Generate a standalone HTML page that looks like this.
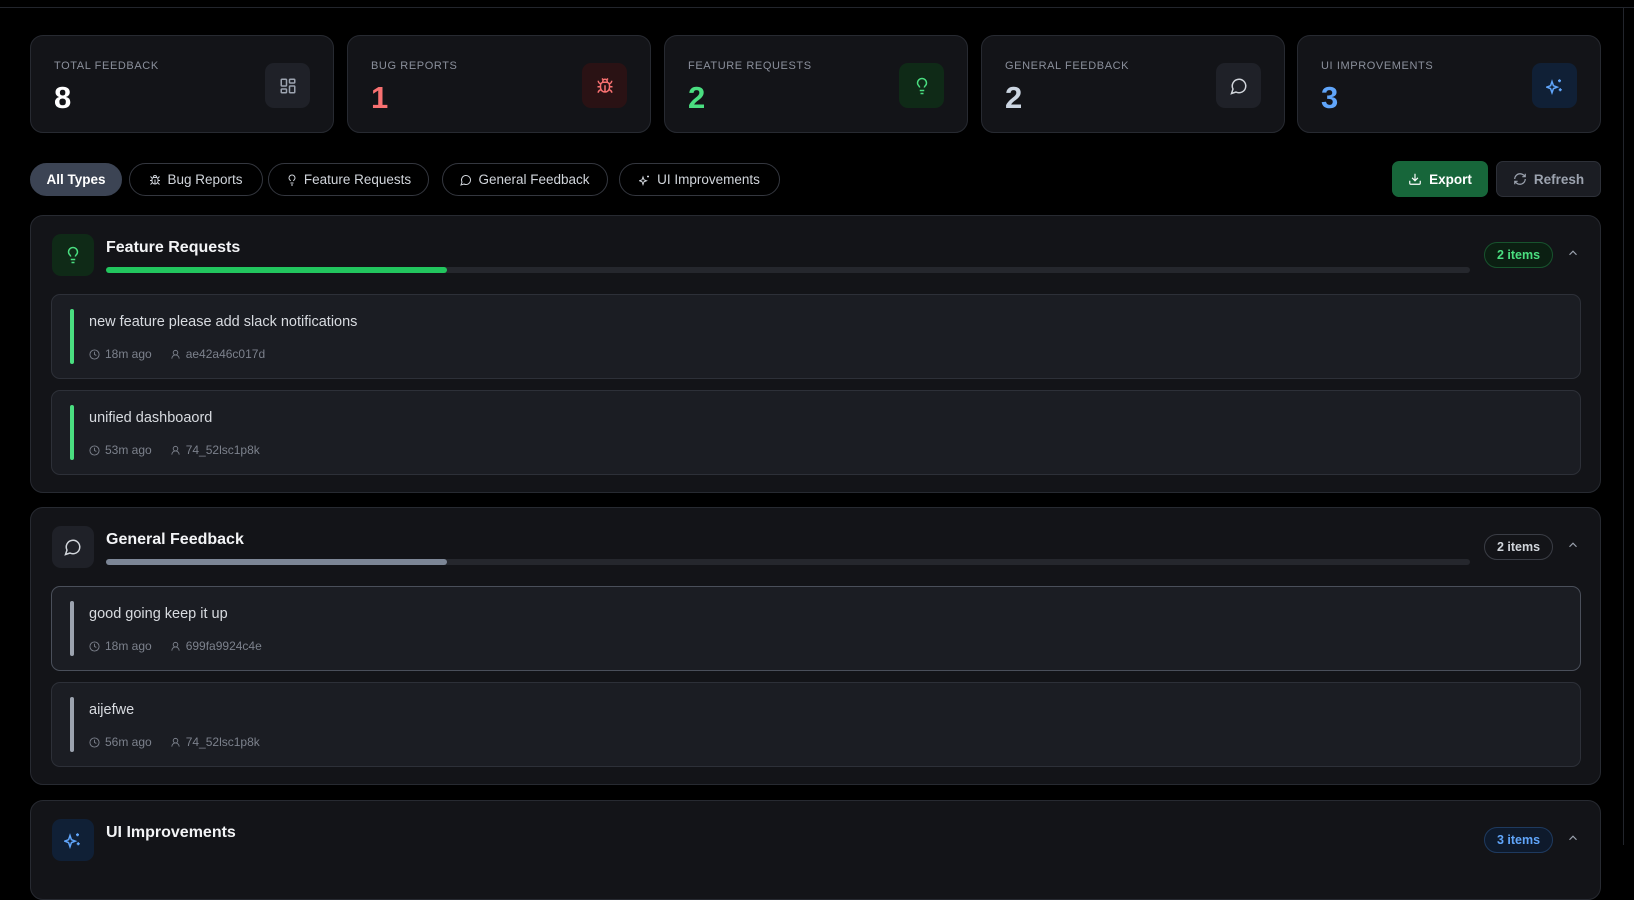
<!DOCTYPE html>
<html><head><meta charset="utf-8"><style>
*{box-sizing:border-box;margin:0;padding:0}
body{width:1634px;height:845px;background:#000;font-family:"Liberation Sans",sans-serif;color:#e5e7eb;position:relative;overflow:hidden}
.abs{position:absolute}
.stat{position:absolute;top:35px;width:304px;height:98px;background:#131418;border:1px solid #272a31;border-radius:13px}
.stat .lbl{position:absolute;left:23px;top:24px;font-size:11px;letter-spacing:.6px;color:#8b909c}
.stat .num{position:absolute;left:23px;top:44px;font-size:31px;font-weight:bold}
.stat .ic{position:absolute;right:23px;top:27px;width:45px;height:45px;border-radius:9px;display:flex;align-items:center;justify-content:center}
.pill{position:absolute;top:163px;height:33px;border:1px solid #34373f;border-radius:17px;font-size:13.5px;color:#d1d5db;display:flex;align-items:center;justify-content:center;gap:6px}
.btn{position:absolute;top:161px;height:36px;border-radius:7px;font-size:13.5px;font-weight:bold;display:flex;align-items:center;justify-content:center;gap:7px}
.sec{position:absolute;left:30px;width:1571px;background:#131418;border:1px solid #272a31;border-radius:13px}
.sic{position:absolute;left:21px;top:18px;width:42px;height:42px;border-radius:9px;display:flex;align-items:center;justify-content:center}
.stitle{position:absolute;left:75px;top:23px;font-size:16px;font-weight:bold;color:#f3f4f6}
.bar{position:absolute;left:75px;top:51px;width:1364px;height:6px;border-radius:3px;background:#25272d}
.bar i{display:block;height:6px;width:341px;border-radius:3px}
.badge{position:absolute;left:1453px;top:26px;height:26px;padding:0 12px;border-radius:13px;font-size:12.5px;font-weight:bold;display:flex;align-items:center}
.chev{position:absolute;left:1535px;top:30px}
.item{position:absolute;left:20px;width:1530px;height:85px;background:#1b1d23;border:1px solid #2d3038;border-radius:9px}
.item .vb{position:absolute;left:18px;top:14px;width:4px;height:55px;border-radius:2px}
.item .t{position:absolute;left:37px;top:19px;font-size:14.5px;color:#d8dbe0}
.item .m{position:absolute;left:37px;top:52px;font-size:12px;color:#7c818c;display:flex;align-items:center;gap:5px}
</style></head><body>
<div class="abs" style="left:0;top:7px;width:1634px;height:1px;background:#22252c"></div>
<div class="abs" style="left:1623px;top:7px;width:1px;height:838px;background:#22252c"></div>

<div class="stat" style="left:30px"><div class="lbl">TOTAL FEEDBACK</div><div class="num" style="color:#fff">8</div><div class="ic" style="background:#1f2128"><svg width="18" height="18" viewBox="0 0 24 24" fill="none" stroke="#9ca3af" stroke-width="2"><rect x="3" y="3" width="7" height="9" rx="1"/><rect x="14" y="3" width="7" height="5" rx="1"/><rect x="14" y="12" width="7" height="9" rx="1"/><rect x="3" y="16" width="7" height="5" rx="1"/></svg></div></div>
<div class="stat" style="left:347px"><div class="lbl">BUG REPORTS</div><div class="num" style="color:#f87171">1</div><div class="ic" style="background:#2a1214"><svg width="18" height="18" viewBox="0 0 24 24" fill="none" stroke="#f87171" stroke-width="2"><path d="M8 2l1.9 1.9M16 2l-1.9 1.9M9 7.1V6a3 3 0 016 0v1.1M12 20c-3.3 0-6-2.7-6-6v-3a4 4 0 014-4h4a4 4 0 014 4v3c0 3.3-2.7 6-6 6zM12 20v-9M6.5 9C4.6 8.8 3 7.1 3 5M6 13H2M3 21c0-2.1 1.7-3.9 3.8-4M20.970 5c0 2.1-1.6 3.8-3.5 4M22 13h-4M17.2 17c2.1.1 3.8 1.9 3.8 4"/></svg></div></div>
<div class="stat" style="left:664px"><div class="lbl">FEATURE REQUESTS</div><div class="num" style="color:#4ade80">2</div><div class="ic" style="background:#0f2a17"><svg width="18" height="18" viewBox="0 0 24 24" fill="none" stroke="#4ade80" stroke-width="2"><path d="M15 14c.2-1 .7-1.7 1.5-2.5 1-.9 1.5-2.2 1.5-3.5A6 6 0 006 8c0 1 .2 2.2 1.5 3.5.7.7 1.3 1.5 1.5 2.5M9 18h6M10 22h4"/></svg></div></div>
<div class="stat" style="left:981px"><div class="lbl">GENERAL FEEDBACK</div><div class="num" style="color:#cbd5e1">2</div><div class="ic" style="background:#1f2128"><svg width="18" height="18" viewBox="0 0 24 24" fill="none" stroke="#d1d5db" stroke-width="2"><path d="M7.9 20A9 9 0 104 16.1L2 22z"/></svg></div></div>
<div class="stat" style="left:1297px"><div class="lbl">UI IMPROVEMENTS</div><div class="num" style="color:#60a5fa">3</div><div class="ic" style="background:#102036"><svg width="18" height="18" viewBox="0 0 24 24" fill="none" stroke="#60a5fa" stroke-width="2"><path d="M9.9 15.5L8 21l-1.9-5.5L1 13.5l5.1-1.9L8 6l1.9 5.6L15 13.5zM18 3v4M16 5h4M19 15v4M17 17h4"/></svg></div></div>

<div class="pill" style="left:30px;width:92px;background:#3c4454;border-color:#3c4454;color:#fff;font-weight:bold">All Types</div>
<div class="pill" style="left:129px;width:134px"><svg width="12" height="12" viewBox="0 0 24 24" fill="none" stroke="#d1d5db" stroke-width="2"><path d="M9 7V6a3 3 0 016 0v1M12 20c-3.3 0-6-2.7-6-6v-3a4 4 0 014-4h4a4 4 0 014 4v3c0 3.3-2.7 6-6 6zM12 20v-9M6 13H2M22 13h-4M3 5l3 3M21 5l-3 3M3 21l3-3M21 21l-3-3"/></svg>Bug Reports</div>
<div class="pill" style="left:268px;width:161px"><svg width="12" height="12" viewBox="0 0 24 24" fill="none" stroke="#d1d5db" stroke-width="2"><path d="M15 14c.2-1 .7-1.7 1.5-2.5 1-.9 1.5-2.2 1.5-3.5A6 6 0 006 8c0 1 .2 2.2 1.5 3.5.7.7 1.3 1.5 1.5 2.5M9 18h6M10 22h4"/></svg>Feature Requests</div>
<div class="pill" style="left:442px;width:166px"><svg width="12" height="12" viewBox="0 0 24 24" fill="none" stroke="#d1d5db" stroke-width="2"><path d="M7.9 20A9 9 0 104 16.1L2 22z"/></svg>General Feedback</div>
<div class="pill" style="left:619px;width:161px"><svg width="12" height="12" viewBox="0 0 24 24" fill="none" stroke="#d1d5db" stroke-width="2"><path d="M9.9 15.5L8 21l-1.9-5.5L1 13.5l5.1-1.9L8 6l1.9 5.6L15 13.5zM18 3v4M16 5h4"/></svg>UI Improvements</div>

<div class="btn" style="left:1392px;width:96px;background:#17663a;color:#fff"><svg width="14" height="14" viewBox="0 0 24 24" fill="none" stroke="#fff" stroke-width="2"><path d="M21 15v4a2 2 0 01-2 2H5a2 2 0 01-2-2v-4M7 10l5 5 5-5M12 15V3"/></svg>Export</div>
<div class="btn" style="left:1496px;width:105px;background:#1b1d23;border:1px solid #2d3038;color:#9ca3af"><svg width="14" height="14" viewBox="0 0 24 24" fill="none" stroke="#9ca3af" stroke-width="2"><path d="M3 12a9 9 0 019-9 9.75 9.75 0 016.74 2.74L21 8M21 3v5h-5M21 12a9 9 0 01-9 9 9.75 9.75 0 01-6.74-2.74L3 16M8 16H3v5"/></svg>Refresh</div>

<div class="sec" style="top:215px;height:278px">
 <div class="sic" style="background:#0f2a17"><svg width="18" height="18" viewBox="0 0 24 24" fill="none" stroke="#4ade80" stroke-width="2"><path d="M15 14c.2-1 .7-1.7 1.5-2.5 1-.9 1.5-2.2 1.5-3.5A6 6 0 006 8c0 1 .2 2.2 1.5 3.5.7.7 1.3 1.5 1.5 2.5M9 18h6M10 22h4"/></svg></div>
 <div class="stitle">Feature Requests</div>
 <div class="bar"><i style="background:#22c55e"></i></div>
 <div class="badge" style="background:#0b1f12;border:1px solid #17532d;color:#4ade80">2 items</div>
 <svg class="chev" width="14" height="14" viewBox="0 0 24 24" fill="none" stroke="#9ca3af" stroke-width="2"><path d="M6 15l6-6 6 6"/></svg>
 <div class="item" style="top:78px"><div class="vb" style="background:#4ade80"></div><div class="t">new feature please add slack notifications</div>
  <div class="m"><svg width="11" height="11" viewBox="0 0 24 24" fill="none" stroke="#7c818c" stroke-width="2"><circle cx="12" cy="12" r="10"/><path d="M12 6v6l4 2"/></svg>18m ago<span style="width:8px"></span><svg width="11" height="11" viewBox="0 0 24 24" fill="none" stroke="#7c818c" stroke-width="2"><circle cx="12" cy="8" r="5"/><path d="M20 21a8 8 0 00-16 0"/></svg>ae42a46c017d</div></div>
 <div class="item" style="top:174px"><div class="vb" style="background:#4ade80"></div><div class="t">unified dashboaord</div>
  <div class="m"><svg width="11" height="11" viewBox="0 0 24 24" fill="none" stroke="#7c818c" stroke-width="2"><circle cx="12" cy="12" r="10"/><path d="M12 6v6l4 2"/></svg>53m ago<span style="width:8px"></span><svg width="11" height="11" viewBox="0 0 24 24" fill="none" stroke="#7c818c" stroke-width="2"><circle cx="12" cy="8" r="5"/><path d="M20 21a8 8 0 00-16 0"/></svg>74_52lsc1p8k</div></div>
</div>

<div class="sec" style="top:507px;height:278px">
 <div class="sic" style="background:#1f2128"><svg width="18" height="18" viewBox="0 0 24 24" fill="none" stroke="#d1d5db" stroke-width="2"><path d="M7.9 20A9 9 0 104 16.1L2 22z"/></svg></div>
 <div class="stitle">General Feedback</div>
 <div class="bar"><i style="background:#7c8696"></i></div>
 <div class="badge" style="background:#131418;border:1px solid #3a3d45;color:#d1d5db">2 items</div>
 <svg class="chev" width="14" height="14" viewBox="0 0 24 24" fill="none" stroke="#9ca3af" stroke-width="2"><path d="M6 15l6-6 6 6"/></svg>
 <div class="item" style="top:78px;border-color:#4a4f5a"><div class="vb" style="background:#9ca3af"></div><div class="t">good going keep it up</div>
  <div class="m"><svg width="11" height="11" viewBox="0 0 24 24" fill="none" stroke="#7c818c" stroke-width="2"><circle cx="12" cy="12" r="10"/><path d="M12 6v6l4 2"/></svg>18m ago<span style="width:8px"></span><svg width="11" height="11" viewBox="0 0 24 24" fill="none" stroke="#7c818c" stroke-width="2"><circle cx="12" cy="8" r="5"/><path d="M20 21a8 8 0 00-16 0"/></svg>699fa9924c4e</div></div>
 <div class="item" style="top:174px"><div class="vb" style="background:#9ca3af"></div><div class="t">aijefwe</div>
  <div class="m"><svg width="11" height="11" viewBox="0 0 24 24" fill="none" stroke="#7c818c" stroke-width="2"><circle cx="12" cy="12" r="10"/><path d="M12 6v6l4 2"/></svg>56m ago<span style="width:8px"></span><svg width="11" height="11" viewBox="0 0 24 24" fill="none" stroke="#7c818c" stroke-width="2"><circle cx="12" cy="8" r="5"/><path d="M20 21a8 8 0 00-16 0"/></svg>74_52lsc1p8k</div></div>
</div>

<div class="sec" style="top:800px;height:100px">
 <div class="sic" style="background:#102036"><svg width="18" height="18" viewBox="0 0 24 24" fill="none" stroke="#60a5fa" stroke-width="2"><path d="M9.9 15.5L8 21l-1.9-5.5L1 13.5l5.1-1.9L8 6l1.9 5.6L15 13.5zM18 3v4M16 5h4M19 15v4M17 17h4"/></svg></div>
 <div class="stitle">UI Improvements</div>
 <div class="badge" style="background:#0e1a2c;border:1px solid #1e3a5f;color:#60a5fa">3 items</div>
 <svg class="chev" width="14" height="14" viewBox="0 0 24 24" fill="none" stroke="#9ca3af" stroke-width="2"><path d="M6 15l6-6 6 6"/></svg>
</div>
</body></html>
